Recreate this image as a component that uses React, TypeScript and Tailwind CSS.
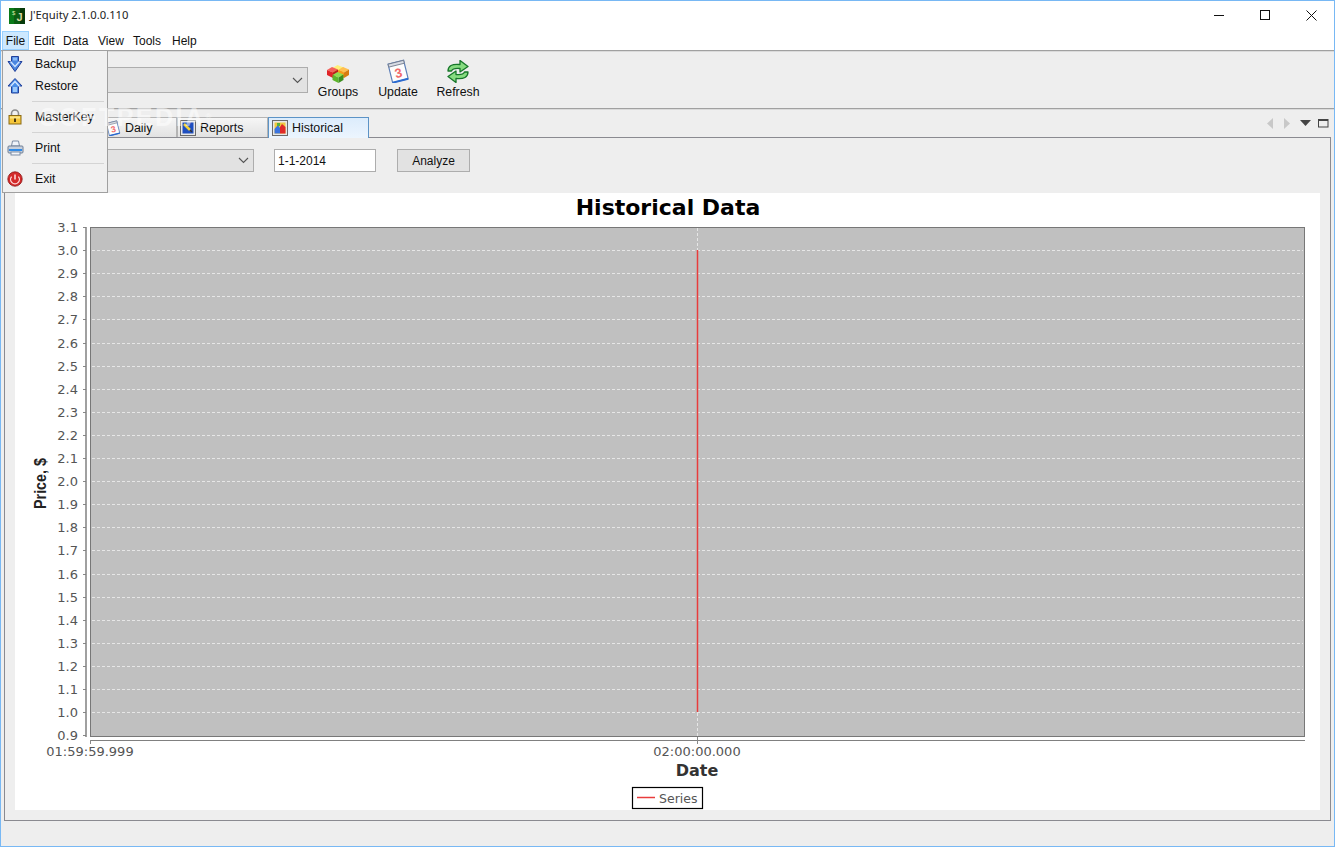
const yTicks = ["3.1","3.0","2.9","2.8","2.7","2.6","2.5","2.4","2.3","2.2","2.1","2.0","1.9","1.8","1.7","1.6","1.5","1.4","1.3","1.2","1.1","1.0","0.9"];

const Chevron = () => (
  <svg width="11" height="7" viewBox="0 0 11 7" className="shrink-0">
    <path d="M1 1l4.5 4.5L10 1" fill="none" stroke="#555" strokeWidth="1.1" />
  </svg>
);

const AppLogo = () => (
  <svg width="16" height="16" viewBox="0 0 16 16" className="shrink-0">
    <rect width="16" height="16" fill="#0b5c12" />
    <rect x="0" y="0" width="5" height="16" fill="#0a7a18" />
    <rect x="11" y="0" width="5" height="16" fill="#063a0a" />
    <text x="7.5" y="13" fontSize="11" fontWeight="700" fill="#d8d8a0" fontFamily="Liberation Sans, sans-serif">J</text>
    <text x="3" y="7" fontSize="6" fill="#d8e8a0" fontFamily="Liberation Sans, sans-serif">$</text>
  </svg>
);

const ArrowDown = () => (
  <svg width="16" height="16" viewBox="0 0 16 16">
    <path d="M4.500.5h7v5H15l-7 10-7-10h3.500z" fill="#4a86e0" stroke="#23409a" strokeWidth="1" strokeLinejoin="round" />
    <path d="M3.500 5.500L8 10.500l4.500-5" fill="none" stroke="#cfe4ff" strokeWidth="1.300" />
    <path d="M6 1.500h4v3H6z" fill="#8cbcf6" />
  </svg>
);

const ArrowUp = () => (
  <svg width="16" height="16" viewBox="0 0 16 16">
    <path d="M8 .5l7 7.500h-3.500v7h-7V8H1z" fill="#4a8ee8" stroke="#23409a" strokeWidth="1" strokeLinejoin="round" />
    <path d="M3.500 8.500L8 3.500l4.500 5" fill="none" stroke="#d6e8ff" strokeWidth="1.300" />
    <path d="M6 9h4v5H6z" fill="#9cc8fa" />
  </svg>
);

const LockIcon = () => (
  <svg width="16" height="16" viewBox="0 0 16 16">
    <path d="M4.500 7V4.500a3.500 3.500 0 017 0V7" fill="none" stroke="#8c8c8c" strokeWidth="1.600" />
    <rect x="2" y="6.500" width="12" height="8.500" fill="#f6c63a" stroke="#8a6a14" />
    <rect x="3" y="7.500" width="10" height="2" fill="#fbe68a" />
    <rect x="7" y="9.500" width="2" height="3.500" fill="#4a3a10" />
  </svg>
);

const PrinterIcon = () => (
  <svg width="17" height="16" viewBox="0 0 17 16">
    <path d="M4.500 6l1-5h6l1 5z" fill="#eef3fa" stroke="#7d8da5" />
    <rect x="1" y="6" width="15" height="7" rx="1" fill="#c8d0dc" stroke="#6f7f96" />
    <rect x="2" y="9" width="13" height="2" fill="#2f8be8" />
    <rect x="4" y="12" width="9" height="3" fill="#f4f6fa" stroke="#7d8da5" />
  </svg>
);

const ExitIcon = () => (
  <svg width="16" height="16" viewBox="0 0 16 16">
    <circle cx="8" cy="8" r="7.200" fill="#d42a2a" stroke="#8a1414" strokeWidth=".8" />
    <path d="M4.600 5.600a4.400 4.400 0 106.800 0" fill="none" stroke="#ffe0e0" strokeWidth="1.300" />
    <path d="M8 3.500v5" stroke="#ffe0e0" strokeWidth="1.500" />
  </svg>
);

const Cube = ({ x, y, top, left, right }: { x: number; y: number; top: string; left: string; right: string }) => (
  <g transform={`translate(${x} ${y})`}>
    <path d="M0 3l5-3 6 2.500-5 3z" fill={top} />
    <path d="M0 3l6 2.500V11L0 8z" fill={left} />
    <path d="M6 5.500l5-3V8l-5 3z" fill={right} />
  </g>
);

const GroupsIcon = () => (
  <svg width="22" height="18" viewBox="0 0 22 18">
    <Cube x={5.500} y={0} top="#fff07a" left="#e8c820" right="#d0a818" />
    <Cube x={0} y={2} top="#f4605a" left="#e02428" right="#b81c20" />
    <Cube x={11} y={2} top="#ffc050" left="#f89a18" right="#d87c10" />
    <Cube x={5.500} y={7} top="#90dc50" left="#5cb52a" right="#3e9020" />
  </svg>
);

const CalendarIcon = ({ size = 24 }: { size?: number }) => (
  <svg width={size} height={size} viewBox="0 0 24 24">
    <g transform="rotate(-14 12 12)">
      <rect x="4" y="3" width="16" height="19" fill="#fdfdfd" stroke="#5d7fb8" strokeWidth="1.200" />
      <rect x="4" y="3" width="16" height="3" fill="#d8dce4" stroke="#6d7688" strokeWidth=".8" />
      <path d="M4 22h16" stroke="#2a6ad0" strokeWidth="2" />
      <text x="12" y="18.500" textAnchor="middle" fontSize="13" fontWeight="700" fill="#f26a6a" fontFamily="Liberation Sans, sans-serif">3</text>
    </g>
  </svg>
);

const RefreshIcon = () => (
  <svg width="22" height="23" viewBox="0 0 22 23">
    <path d="M1 11C1 6 5 3.500 13 4.500V.5l8 6-8 5.500V8.500C8 8 5.500 8.500 4.500 11z" fill="#86dc80" stroke="#17762a" strokeWidth="1.300" strokeLinejoin="round" />
    <path d="M21 12c0 5-4 7.500-12 6.500v4l-8-6 8-5.500v3.500c5 .5 7.500 0 8.500-2.500z" fill="#86dc80" stroke="#17762a" strokeWidth="1.300" strokeLinejoin="round" />
  </svg>
);

const ReportsIcon = () => (
  <svg width="16" height="16" viewBox="0 0 16 16" className="shrink-0">
    <rect x=".5" y=".5" width="15" height="15" fill="#e8e8e8" stroke="#6a6a6a" />
    <rect x="2.500" y="2.500" width="11" height="11" fill="#1f4fc0" />
    <path d="M4 4l6 6" stroke="#f2d23a" strokeWidth="2.500" />
    <path d="M10 10l2 2" stroke="#303030" strokeWidth="1.500" />
  </svg>
);

const HistoricalIcon = () => (
  <svg width="16" height="16" viewBox="0 0 16 16" className="shrink-0">
    <rect x=".5" y=".5" width="15" height="15" fill="#e8e8e8" stroke="#6a6a6a" />
    <rect x="2.500" y="2.500" width="11" height="11" fill="#f0c840" />
    <path d="M2.500 9L6 5l2 3 0 5.500H2.500z" fill="#3a74e0" />
    <path d="M8 13.500V7l2-3 3.500 3v6.500z" fill="#e02a2a" />
    <path d="M5 3h3v3H5z" fill="#58b040" />
  </svg>
);

const ToolButton = ({ icon, label }: { icon: React.ReactNode; label: string }) => (
  <div className="w-[60px] h-full flex flex-col items-center">
    <div className="h-[34px] flex items-end justify-center pb-[3px]">{icon}</div>
    <span className="text-[12.3px] leading-[14px] mt-[-1px] text-[#111]">{label}</span>
  </div>
);

const MenuItem = ({ icon, label }: { icon: React.ReactNode; label: string }) => (
  <div className="h-[22px] flex items-center">
    <div className="w-[24px] flex justify-center shrink-0">{icon}</div>
    <span className="text-[12.3px] ml-[8px] text-[#111]">{label}</span>
  </div>
);

const MenuSep = () => (
  <div className="h-[9px] flex items-center pl-[29px] pr-[3px]">
    <div className="h-px w-full bg-[#d4d4d4]" />
  </div>
);

const Tab = ({ icon, label, width, active }: { icon: React.ReactNode; label: string; width: string; active?: boolean }) => (
  <div
    className={
      active
        ? `${width} h-[21px] -mb-px relative z-10 flex items-center gap-[4px] pl-[3px] border border-b-0 border-[#5c93c6] bg-gradient-to-b from-[#dcecfc] to-[#ecf5fe]`
        : `${width} h-[20px] flex items-center gap-[4px] pl-[2px] pt-px border border-b-0 border-[#b4b4b4] bg-gradient-to-b from-[#f6f6f6] to-[#e2e2e2]`
    }
  >
    {icon}
    <span className="text-[12.4px] text-[#111]">{label}</span>
  </div>
);

const HistoricalChart = () => (
  <svg viewBox="15 193 1305 617" width="1305" height="617" className="block" fontFamily="DejaVu Sans, sans-serif">
    <text x="668" y="215" textAnchor="middle" fontSize="22" fontWeight="700" fill="#000">Historical Data</text>

    <rect x="90.500" y="227.500" width="1214" height="509" fill="#c0c0c0" stroke="#777" />
    {yTicks.map((t, i) => {
      const y = Math.round(227 + i * 23.1) + 0.5;
      return (
        <g key={t}>
          {i > 0 && i < 22 && <line x1="92" x2="1303" y1={y} y2={y} stroke="#e6e6e6" strokeDasharray="3 2" />}
          <line x1="83" x2="86" y1={y} y2={y} stroke="#888" />
          <text x="78" y={y + 4} textAnchor="end" fontSize="13" fill="#555">{t}</text>
        </g>
      );
    })}
    <line x1="697.500" x2="697.500" y1="228" y2="736" stroke="#e6e6e6" strokeDasharray="3 2" />
    <line x1="697.500" x2="697.500" y1="250" y2="712" stroke="#e83c3c" strokeWidth="1.500" />

    <line x1="86" x2="86" y1="227" y2="737" stroke="#808080" strokeWidth="1.500" />
    <line x1="90" x2="1305" y1="740.500" y2="740.500" stroke="#808080" strokeWidth="1.200" />
    <line x1="90.500" x2="90.500" y1="740" y2="744" stroke="#888" />
    <line x1="697.500" x2="697.500" y1="737" y2="744" stroke="#888" />

    <text x="90" y="756" textAnchor="middle" fontSize="13" fill="#555">01:59:59.999</text>
    <text x="697" y="756" textAnchor="middle" fontSize="13" fill="#555">02:00:00.000</text>
    <text x="697" y="776" textAnchor="middle" fontSize="16" fontWeight="700" fill="#333">Date</text>
    <text x="46" y="483.500" textAnchor="middle" fontSize="17" fontWeight="700" fill="#222" textLength="51" lengthAdjust="spacingAndGlyphs" fontFamily="Liberation Sans, sans-serif" transform="rotate(-90 46 483.500)">Price, $</text>

    <rect x="632.500" y="787.500" width="70" height="21" fill="#fff" stroke="#000" strokeWidth="1.200" />
    <line x1="637" x2="655" y1="797.500" y2="797.500" stroke="#e83c3c" strokeWidth="1.500" />
    <text x="659" y="803" fontSize="12.500" fill="#555">Series</text>
  </svg>
);

export default function App() {
  return (
    <div className="relative w-[1335px] h-[847px] overflow-hidden flex flex-col border border-[#78b8f4] bg-[#eeeeee] font-['Liberation_Sans',Arial,sans-serif] text-[#111]">
      {/* Title bar */}
      <div className="h-[29px] bg-white flex items-center pl-[8px] shrink-0">
        <AppLogo />
        <span className="ml-[5px] text-[11.25px] font-['Noto_Sans',sans-serif] text-[#222]">J'Equity 2.1.0.0.110</span>
        <div className="ml-auto flex items-center h-full pr-[17px] gap-[35px]">
          <svg width="11" height="11" viewBox="0 0 11 11"><path d="M0 5.500h10" stroke="#111" /></svg>
          <svg width="11" height="11" viewBox="0 0 11 11"><rect x=".5" y=".5" width="9" height="9" fill="none" stroke="#111" /></svg>
          <svg width="11" height="11" viewBox="0 0 11 11"><path d="M.5.5l10 10M10.500.5l-10 10" stroke="#111" /></svg>
        </div>
      </div>

      {/* Menu bar */}
      <div className="h-[20px] bg-white flex items-center text-[12px] pt-[2px] shrink-0">
        <div className="ml-px -mt-px w-[27px] h-[19px] flex items-center justify-center bg-[#cce8ff] border border-[#99d1ff]">File</div>
        <span className="w-[34px] pl-[5px]">Edit</span>
        <span className="w-[35px]">Data</span>
        <span className="w-[35px]">View</span>
        <span className="w-[39px]">Tools</span>
        <span>Help</span>
      </div>
      <div className="h-[2px] bg-[#a0a0a0] border-b border-[#dadada] shrink-0" />

      {/* Toolbar */}
      <div className="h-[56px] flex items-start pl-[7px] shrink-0">
        <div className="w-[300px] h-[26px] mt-[15px] flex items-center justify-end pr-[4px] bg-[#e2e2e2] border border-[#adadad]">
          <Chevron />
        </div>
        <div className="flex h-full">
          <ToolButton icon={<GroupsIcon />} label="Groups" />
          <ToolButton icon={<CalendarIcon />} label="Update" />
          <ToolButton icon={<RefreshIcon />} label="Refresh" />
        </div>
      </div>
      <div className="h-[2px] bg-[#a0a0a0] border-b border-[#dadada] shrink-0" />

      {/* Tabs */}
      <div className="h-[27px] flex items-end pl-[101px] pr-[5px] shrink-0">
        <Tab icon={<CalendarIcon size={16} />} label="Daily" width="w-[75px]" />
        <Tab icon={<ReportsIcon />} label="Reports" width="w-[91px]" />
        <Tab icon={<HistoricalIcon />} label="Historical" width="w-[101px]" active />
        <div className="ml-auto h-full flex items-center gap-[9px] pb-[1px] mt-[1px]">
          <svg width="8" height="11" viewBox="0 0 8 11"><path d="M7 0v11L1 5.500z" fill="#c8c8c8" /></svg>
          <svg width="8" height="11" viewBox="0 0 8 11"><path d="M1 0v11l6-5.500z" fill="#c8c8c8" /></svg>
          <svg width="11" height="7" viewBox="0 0 11 7"><path d="M0 0h11L5.500 6z" fill="#444" /></svg>
          <svg width="11" height="9" viewBox="0 0 11 9" className="-ml-[2px]"><rect x=".5" y=".5" width="9.500" height="7.500" fill="none" stroke="#444" /><path d="M0 1.500h10" stroke="#444" /></svg>
        </div>
      </div>

      {/* Historical panel */}
      <div className="flex-1 mx-[3px] mb-[25px] border border-[#8a8a90] px-[10px] pt-[11px] pb-[10px] flex flex-col min-h-0">
        <div className="h-[23px] flex items-stretch text-[12px] shrink-0">
          <div className="w-[239px] flex items-center justify-end pr-[4px] bg-[#e2e2e2] border border-[#adadad]">
            <Chevron />
          </div>
          <div className="ml-[20px] w-[102px] flex items-center pl-[3px] bg-white border border-[#adadad]">1-1-2014</div>
          <div className="ml-[21px] w-[73px] flex items-center justify-center bg-[#e2e2e2] border border-[#adadad]">Analyze</div>
        </div>
        <div className="mt-[21px] flex-1 bg-white">
          <HistoricalChart />
        </div>
      </div>

      {/* File menu */}
      <div className="absolute left-[1px] top-[49px] w-[106px] h-[143px] z-20 bg-[#f0f0f0] border border-[#a0a0a0] pt-[2px]">
        <MenuItem icon={<ArrowDown />} label="Backup" />
        <MenuItem icon={<ArrowUp />} label="Restore" />
        <MenuSep />
        <MenuItem icon={<LockIcon />} label="MasterKey" />
        <MenuSep />
        <MenuItem icon={<PrinterIcon />} label="Print" />
        <MenuSep />
        <MenuItem icon={<ExitIcon />} label="Exit" />
      </div>

      {/* Watermark */}
      <div className="absolute left-[39px] top-[101px] z-30 pointer-events-none text-[25px] leading-[30px] font-bold tracking-[2.5px] text-white/50">
        SOFTPEDIA<span className="text-[8px] align-top">®</span>
      </div>
    </div>
  );
}
